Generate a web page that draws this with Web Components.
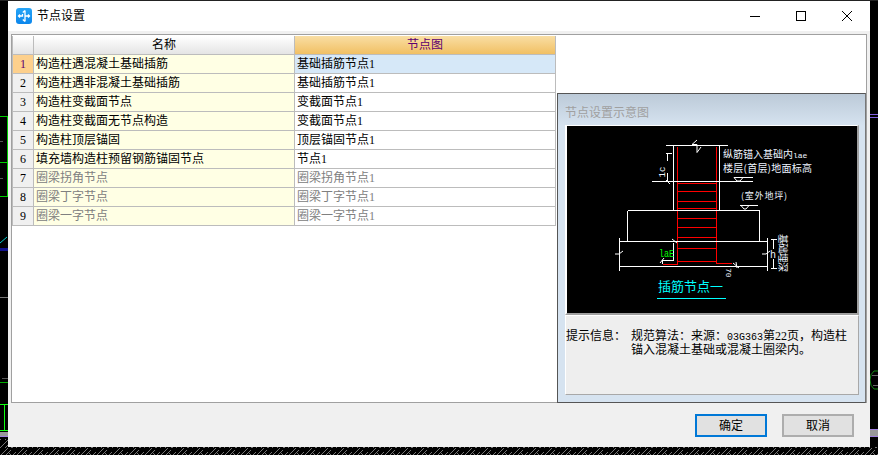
<!DOCTYPE html>
<html lang="zh">
<head>
<meta charset="utf-8">
<title>节点设置</title>
<style>
  html, body { margin: 0; height: 100%; background: #000; overflow: hidden; }
  body { font: 12px/19px "Liberation Serif", "Noto Sans CJK SC", serif; color: #000; }
</style>
</head>
<body>
<cad-desktop>
  <node-dialog heading="节点设置">
    <node-grid></node-grid>
    <preview-panel heading="节点设置示意图">
      <node-diagram></node-diagram>
      <span slot="label">提示信息&#xFF1A;</span>
      <span slot="hint">规范算法&#xFF1A;来源&#xFF1A;<span style="font:10px/12px 'Liberation Mono',monospace">03G363</span>第22页&#xFF0C;构造柱<br>锚入混凝土基础或混凝土圈梁内。</span>
    </preview-panel>
    <dlg-button slot="buttons" primary>确定</dlg-button>
    <dlg-button slot="buttons">取消</dlg-button>
  </node-dialog>
</cad-desktop>
<script>
class CadDesktop extends HTMLElement {
  constructor() {
    super()
    this.attachShadow({ mode: 'open' })
    this.shadowRoot.innerHTML = `
      <style>
        :host { display: block; position: relative; width: 878px; height: 455px; overflow: hidden; background: #000; }
        svg { position: absolute; left: 0; top: 0; }
        ::slotted(*) { position: absolute; left: 8px; top: 1px; }
      </style>
      <svg width="878" height="455" fill="none" shape-rendering="crispEdges">
        <defs>
          <pattern id="hatch" width="16" height="8" patternUnits="userSpaceOnUse">
            <path d="M0 8L8 0M5 8L11 2M12 8L16 4M8 4L12 8" stroke="#777"/>
          </pattern>
        </defs>
        <path d="M0 .5H878" stroke="#222"/>
        <path d="M0 116.500H8M7.500 116V196M0 162.500H8M0 196.500H8" stroke="#0c0"/>
        <path d="M0 382.500H8" stroke="#0a0"/>
        <path d="M0 404.500H8M4.500 404V430M0 430.500H8" stroke="#1f1"/>
        <rect x="0" y="248" width="8" height="3" fill="#10108a"/>
        <path d="M0 243L7 237" stroke="#0cc" shape-rendering="auto"/>
        <path d="M0 297.500H8" stroke="#777"/>
        <path d="M2 378.500H8M0 141.500H3M0 178.500H3" stroke="#555"/>
        <rect x="0" y="432" width="8" height="4" fill="#999"/>
        <path d="M0 436.500H8M870 429.500H878M870 436.500H878" stroke="#a080e0"/>
        <rect x="870" y="430" width="8" height="6" fill="#999"/>
        <path d="M870 114.500H878M870 117.500H878" stroke="#8060e0"/>
        <path d="M878 371H874Q870 374 870 380Q870 386 874 389H878" stroke="#181" shape-rendering="auto"/>
        <path d="M872 375.500H878M873 385.500H878" stroke="#666"/>
        <rect x="0" y="439" width="8" height="16" fill="url(#hatch)"/>
        <rect x="0" y="447" width="878" height="8" fill="url(#hatch)"/>
      </svg>
      <slot></slot>
    `
  }
}

class NodeDialog extends HTMLElement {
  constructor() {
    super()
    this.attachShadow({ mode: 'open' })
    this.shadowRoot.innerHTML = `
      <style>
        :host { display: flex; flex-direction: column; width: 862px; height: 446px; background: #f0f0f0; }
        .title { display: flex; align-items: center; height: 30px; background: #fff; flex: none; }
        .logo { margin-left: 8px; width: 16px; height: 16px; flex: none; }
        .name { margin-left: 5px; line-height: 16px; flex: 1; }
        .ctl { width: 46px; height: 30px; flex: none; display: flex; align-items: center; justify-content: center; }
        .frame { margin: 3px 3px 0; height: 367px; flex: none; display: flex; border: 1px solid #a0a0a0; background: #fff; }
        .btns { display: flex; justify-content: flex-end; gap: 15px; padding: 11px 16px 0 0; }
      </style>
      <div class="title">
        <svg class="logo" viewBox="0 0 16 16">
          <defs><linearGradient id="lg" x1="0" y1="0" x2="0" y2="1"><stop offset="0" stop-color="#27a5f7"/><stop offset="1" stop-color="#0b86ec"/></linearGradient></defs>
          <rect width="16" height="16" rx="3" fill="url(#lg)"/>
          <path d="M9 2.500V13.500M6.800 4.500L9 2.500M6.800 11.500L9 13.500M9 8H13.500M12 6.500L13.500 8L12 9.500M6.500 6V8H2.500M4 6.500L2.500 8L4 9.500" fill="none" stroke="#fff" stroke-width="1.300"/>
        </svg>
        <span class="name"></span>
        <div class="ctl"><svg width="12" height="12" shape-rendering="crispEdges"><path d="M1 6.500H11" stroke="#000"/></svg></div>
        <div class="ctl"><svg width="12" height="12" shape-rendering="crispEdges"><rect x="1.500" y="1.500" width="9" height="9" fill="none" stroke="#000"/></svg></div>
        <div class="ctl"><svg width="12" height="12"><path d="M1 1L11 11M11 1L1 11" stroke="#000" fill="none"/></svg></div>
      </div>
      <div class="frame"><slot></slot></div>
      <div class="btns"><slot name="buttons"></slot></div>
    `
    this.shadowRoot.querySelector('.name').textContent = this.getAttribute('heading')
  }
}

const NODE_ROWS = [
  ['构造柱遇混凝土基础插筋', '基础插筋节点1'],
  ['构造柱遇非混凝土基础插筋', '基础插筋节点1'],
  ['构造柱变截面节点', '变截面节点1'],
  ['构造柱变截面无节点构造', '变截面节点1'],
  ['构造柱顶层锚固', '顶层锚固节点1'],
  ['填充墙构造柱预留钢筋锚固节点', '节点1'],
  ['圈梁拐角节点', '圈梁拐角节点1', true],
  ['圈梁丁字节点', '圈梁丁字节点1', true],
  ['圈梁一字节点', '圈梁一字节点1', true],
]

class NodeGrid extends HTMLElement {
  constructor() {
    super()
    this.attachShadow({ mode: 'open' })
    const rows = NODE_ROWS.map((r, i) => `
      <div class="no ${i == 0 ? 'cur' : ''}">${i + 1}</div>
      <div class="c name ${r[2] ? 'off' : ''}">${r[0]}</div>
      <div class="c val ${i == 0 ? 'sel' : ''} ${r[2] ? 'off' : ''}">${r[1]}</div>
    `).join('')
    this.shadowRoot.innerHTML = `
      <style>
        :host { display: block; flex: none; width: 544px; margin-right: 1px; padding-top: 1px; }
        .grid { display: grid; grid-template-columns: 20px 260px 260px; grid-auto-rows: 18px; gap: 1px; background: #bcbcbc; padding: 0 1px 1px; line-height: 18px; }
        .h { text-align: center; background: linear-gradient(#fff, #e4e4e4); }
        .h.on { background: linear-gradient(#f9dea4, #f1c064); color: #5d0070; }
        .no { text-align: center; background: #f0f0f0; }
        .no.cur { background: #fdd08c; color: #5d0070; }
        .c { white-space: nowrap; overflow: hidden; padding-left: 2px; background: #fff; }
        .name { background: #ffffe4; }
        .sel { background: #d6e8f8; }
        .off { color: #808080; }
      </style>
      <div class="grid">
        <div class="h"></div><div class="h">名称</div><div class="h on">节点图</div>
        ${rows}
      </div>
    `
  }
}

class PreviewPanel extends HTMLElement {
  constructor() {
    super()
    this.attachShadow({ mode: 'open' })
    this.shadowRoot.innerHTML = `
      <style>
        :host { display: flex; flex-direction: column; flex: none; width: 309px; height: 310px; box-sizing: border-box; margin: 58px 0 -1px 0; border: 1px solid #555; border-right-color: #777; background: linear-gradient(#bccad8, #d6e3f0 32px); padding: 0 6px 0 7px; }
        .head { height: 31px; box-sizing: border-box; padding-top: 11px; line-height: 16px; color: #a0a0a0; flex: none; }
        .pic { flex: none; height: 187px; width: 290px; border: solid #fff; border-width: 1px 2px 2px 2px; border-right-color: #a0a0a0; border-bottom-color: #a0a0a0; background: #000; }
        .info { flex: none; box-sizing: border-box; height: 80px; width: 294px; background: #eee; border-top: 1px solid #fff; border-left: 1px solid #fff; border-right: 1px solid #a8a8a8; border-bottom: 1px solid #a8a8a8; padding: 14px 0 0 0; display: grid; grid-template-columns: 65px 1fr; line-height: 12px; align-content: start; }
      </style>
      <div class="head"></div>
      <div class="pic"><slot></slot></div>
      <div class="info"><div><slot name="label"></slot></div><div><slot name="hint"></slot></div></div>
    `
    this.shadowRoot.querySelector('.head').textContent = this.getAttribute('heading')
  }
}

// drawing uses page coordinates, the viewBox shifts it into the black area
class NodeDiagram extends HTMLElement {
  constructor() {
    super()
    this.attachShadow({ mode: 'open' })
    this.shadowRoot.innerHTML = `
      <style>
        :host { display: block; width: 290px; height: 187px; }
        svg { display: block; }
        text { font-family: "Noto Sans CJK SC", "Liberation Mono", sans-serif; }
        .m { font-family: "Liberation Mono", monospace; }
      </style>
      <svg width="290" height="187" viewBox="567 126 290 187" fill="none">
        <g transform="translate(.5 .5)" shape-rendering="crispEdges">
          <g stroke="#f00">
            <path d="M677 146V264H662M716 146V263H731"/>
            <path d="M677 183H716M677 191H716M677 201H716M677 208H716M677 218H716M677 227H716M677 237H716M677 248H716M677 261H716"/>
          </g>
          <g stroke="#fff">
            <path d="M665 145H727M651 181H752M673 145V210M719 145V210"/>
            <path d="M627 210H759M627 210V241M759 210V241"/>
            <path d="M619 241H767M619 266H767M619 237V270M767 237V270"/>
            <path d="M673 242V260H662V263"/>
            <path d="M667 153V160M667 172V181M773 239V248M773 258V268"/>
            <path d="M733 177H752M739 205H757"/>
            <path d="M665 153H671M770 239H776M770 268H776"/>
          </g>
          <path d="M656 298H725" stroke="#0ff"/>
        </g>
        <g stroke="#fff" stroke-width="1" shape-rendering="auto">
          <path d="M697 140L692 144.500H697V152.500L701 147"/>
          <path d="M666 180L670 184M672 239L677 243M660 263L664 258M733 263L739 268M736 262L737 268"/>
          <path d="M615 254H619L623 251M762 254H766L770 251"/>
          <path d="M734 177.500L737 181H740L743 177.500M741 205.500L744 209H746L749 205.500"/>
        </g>
        <g fill="#eef4ff">
          <text x="723" y="158" font-size="10">纵筋锚入基础内<tspan class="m" font-size="8">lae</tspan></text>
          <text x="723" y="172" font-size="10" textLength="89">楼层(首层)地面标高</text>
          <text x="741" y="199" font-size="9" textLength="46">(室外地坪)</text>
          <text class="m" transform="translate(658 172) rotate(-90)" font-size="9" y="7" text-anchor="middle">1c</text>
          <text class="m" transform="translate(725 268) rotate(90)" font-size="8" y="-1">70</text>
          <text transform="translate(778 234) rotate(90)" font-size="10" y="-1" textLength="38">基础埋深</text>
          <text class="m" x="770" y="258" font-size="10">h</text>
        </g>
        <text class="m" x="659" y="257" font-size="10" fill="#0f0" textLength="15" lengthAdjust="spacingAndGlyphs">laE</text>
        <text x="658" y="291" font-size="13" fill="#0ff">插筋节点一</text>
      </svg>
    `
  }
}

class DlgButton extends HTMLElement {
  constructor() {
    super()
    this.attachShadow({ mode: 'open' })
    this.shadowRoot.innerHTML = `
      <style>
        :host { display: flex; align-items: center; justify-content: center; box-sizing: border-box; width: 72px; height: 23px; background: #e1e1e1; border: 2px solid #adadad; line-height: 16px; }
        :host([primary]) { border-color: #0078d7; }
      </style>
      <slot></slot>
    `
  }
}

customElements.define('cad-desktop', CadDesktop)
customElements.define('node-dialog', NodeDialog)
customElements.define('node-grid', NodeGrid)
customElements.define('preview-panel', PreviewPanel)
customElements.define('node-diagram', NodeDiagram)
customElements.define('dlg-button', DlgButton)
</script>
</body>
</html>
